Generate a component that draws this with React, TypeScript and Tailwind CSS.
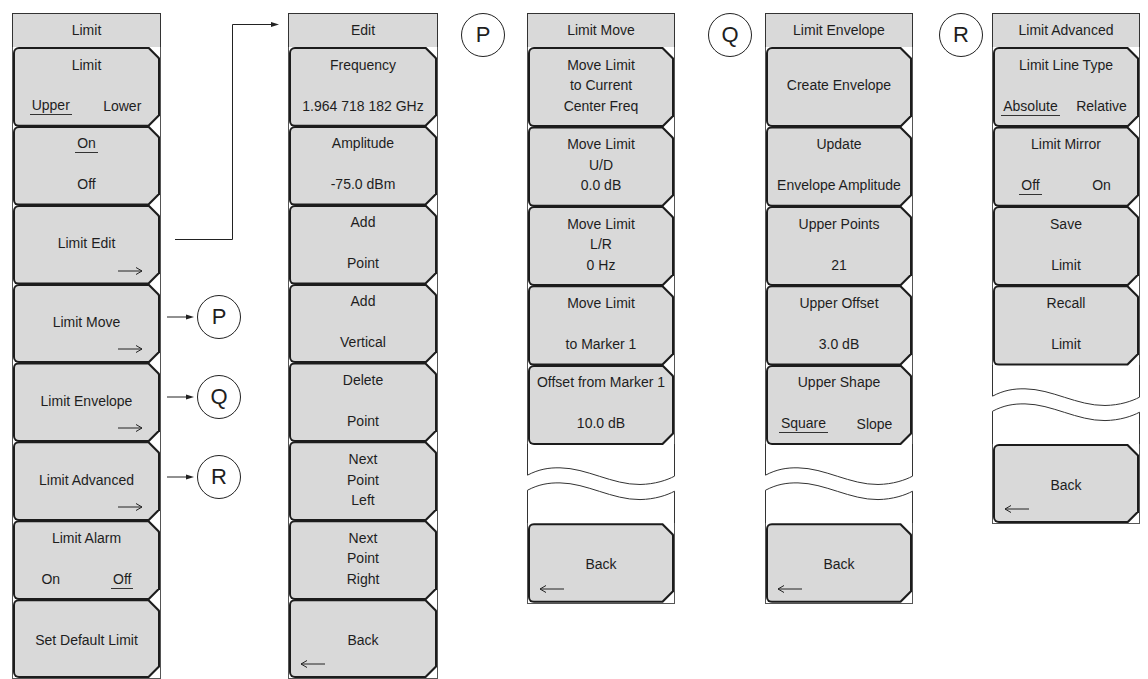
import type { ReactNode } from 'react';

type Row = string | null | { u: string } | { l: string; r: string; sel: 0 | 1 };

interface Btn {
  rows?: Row[];
  label?: string;
  kind?: 'more' | 'back' | 'low';
}

type Item = Btn | 'break';

const col1: Item[] = [
  { rows: ['Limit', null, { l: 'Upper', r: 'Lower', sel: 0 }] },
  { rows: [{ u: 'On' }, null, 'Off'] },
  { label: 'Limit Edit', kind: 'more' },
  { label: 'Limit Move', kind: 'more' },
  { label: 'Limit Envelope', kind: 'more' },
  { label: 'Limit Advanced', kind: 'more' },
  { rows: ['Limit Alarm', null, { l: 'On', r: 'Off', sel: 1 }] },
  { label: 'Set Default Limit', kind: 'low' },
];

const col2: Item[] = [
  { rows: ['Frequency', null, '1.964 718 182 GHz'] },
  { rows: ['Amplitude', null, '-75.0 dBm'] },
  { rows: ['Add', null, 'Point'] },
  { rows: ['Add', null, 'Vertical'] },
  { rows: ['Delete', null, 'Point'] },
  { rows: ['Next', 'Point', 'Left'] },
  { rows: ['Next', 'Point', 'Right'] },
  { label: 'Back', kind: 'back' },
];

const col3: Item[] = [
  { rows: ['Move Limit', 'to Current', 'Center Freq'] },
  { rows: ['Move Limit', 'U/D', '0.0 dB'] },
  { rows: ['Move Limit', 'L/R', '0 Hz'] },
  { rows: ['Move Limit', null, 'to Marker 1'] },
  { rows: ['Offset from Marker 1', null, '10.0 dB'] },
  'break',
  { label: 'Back', kind: 'back' },
];

const col4: Item[] = [
  { rows: [null, 'Create Envelope', null] },
  { rows: ['Update', null, 'Envelope Amplitude'] },
  { rows: ['Upper Points', null, '21'] },
  { rows: ['Upper Offset', null, '3.0 dB'] },
  { rows: ['Upper Shape', null, { l: 'Square', r: 'Slope', sel: 0 }] },
  'break',
  { label: 'Back', kind: 'back' },
];

const col5: Item[] = [
  { rows: ['Limit Line Type', null, { l: 'Absolute', r: 'Relative', sel: 0 }] },
  { rows: ['Limit Mirror', null, { l: 'Off', r: 'On', sel: 0 }] },
  { rows: ['Save', null, 'Limit'] },
  { rows: ['Recall', null, 'Limit'] },
  'break',
  { label: 'Back', kind: 'back' },
];

function Under({ children }: { children: ReactNode }) {
  return (
    <span className="inline-block border-b border-[#333] px-[2px] leading-[17px]">
      {children}
    </span>
  );
}

function RowView({ row }: { row: Row }) {
  if (row === null) return <div className="h-[20.5px]" />;
  if (typeof row === 'string') {
    return (
      <div className="flex h-[20.5px] items-center justify-center whitespace-nowrap">{row}</div>
    );
  }
  if ('u' in row) {
    return (
      <div className="flex h-[20.5px] items-center justify-center">
        <Under>{row.u}</Under>
      </div>
    );
  }
  return (
    <div className="grid h-[20.5px] grid-cols-2 items-center">
      <div className="flex justify-center">{row.sel === 0 ? <Under>{row.l}</Under> : row.l}</div>
      <div className="flex justify-center">{row.sel === 1 ? <Under>{row.r}</Under> : row.r}</div>
    </div>
  );
}

function RightArrow() {
  return (
    <svg width="25" height="10" viewBox="0 0 25 10" className="absolute bottom-[7px] right-[15px]">
      <path d="M0 5H24M18 1.5L24 5L18 8.5" fill="none" stroke="#222" strokeWidth="1" />
    </svg>
  );
}

function LeftArrow() {
  return (
    <svg width="25" height="10" viewBox="0 0 25 10" className="absolute bottom-[7px] left-[9px]">
      <path d="M1 5H25M7 1.5L1 5L7 8.5" fill="none" stroke="#222" strokeWidth="1" />
    </svg>
  );
}

function SoftKey({ btn, last }: { btn: Btn; last: boolean }) {
  return (
    <div
      className={`-mt-px h-[80.4px] border-x border-[#555] bg-white ${last ? 'border-b' : ''}`}
    >
      <div className="h-full rounded-l-[6px] bg-[#1c1c1c] p-[2px] [clip-path:polygon(0_0,calc(100%_-_11px)_0,100%_11px,100%_calc(100%_-_11px),calc(100%_-_11px)_100%,0_100%)]">
        <div className="relative flex h-full flex-col rounded-l-[4px] bg-[#d9d9d9] [clip-path:polygon(0_0,calc(100%_-_10px)_0,100%_10px,100%_calc(100%_-_10px),calc(100%_-_10px)_100%,0_100%)]">
          {btn.rows && (
            <div className="flex flex-col pt-[6px]">
              {btn.rows.map((r, i) => (
                <RowView key={i} row={r} />
              ))}
            </div>
          )}
          {btn.kind === 'more' && (
            <>
              <div className="flex flex-col pt-[6px]">
                <div className="h-[20.5px]" />
                <RowView row={btn.label ?? null} />
              </div>
              <RightArrow />
            </>
          )}
          {(btn.kind === 'back' || btn.kind === 'low') && (
            <>
              <div className="flex flex-col pt-[29px]">
                <RowView row={btn.label ?? null} />
              </div>
              {btn.kind === 'back' && <LeftArrow />}
            </>
          )}
        </div>
      </div>
    </div>
  );
}

function Break() {
  return (
    <div className="-mt-px h-[80.4px]">
      <svg width="100%" height="100%" viewBox="0 0 148 80" preserveAspectRatio="none">
        <g fill="none" stroke="#333" strokeWidth="1" vectorEffect="non-scaling-stroke">
          <path d="M0.5 0V31M0.5 46V80M147.5 0V32M147.5 47V80" vectorEffect="non-scaling-stroke" />
          <path
            d="M0.5 31C12 25 22 23.5 33 23.7C60 24 85 40.5 113 40.3C128 40 140 36 147.5 32"
            vectorEffect="non-scaling-stroke"
          />
          <path
            d="M0.5 46C12 40 22 38.5 33 38.7C60 39 85 55.5 113 55.3C128 55 140 51 147.5 47"
            vectorEffect="non-scaling-stroke"
          />
        </g>
      </svg>
    </div>
  );
}

function Menu({ title, items, width }: { title: string; items: Item[]; width: string }) {
  return (
    <div className={`flex shrink-0 flex-col ${width}`}>
      <div className="flex h-[35px] items-center justify-center border border-[#333] bg-[#d9d9d9]">
        {title}
      </div>
      {items.map((it, i) =>
        it === 'break' ? (
          <Break key={i} />
        ) : (
          <SoftKey key={i} btn={it} last={i === items.length - 1} />
        ),
      )}
    </div>
  );
}

function Badge({ letter }: { letter: string }) {
  return (
    <div className="flex h-[44px] w-[44px] shrink-0 items-center justify-center rounded-full border-[1.5px] border-[#222] text-[22px] leading-none">
      {letter}
    </div>
  );
}

function Pointer() {
  return (
    <svg width="27" height="8" viewBox="0 0 27 8" className="shrink-0">
      <path d="M0 4H21" stroke="#222" strokeWidth="1" />
      <polygon points="27,4 19,1.5 19,6.5" fill="#222" />
    </svg>
  );
}

export default function App() {
  return (
    <div className="flex h-[679px] w-[1148px] overflow-hidden bg-white pl-[12px] pt-[13px] font-['Liberation_Sans',Arial,sans-serif] text-[14px] text-[#1e1e1e]">
      <Menu title="Limit" items={col1} width="w-[149px]" />

      <div className="relative flex w-[127px] shrink-0 flex-col pt-[264px]">
        <svg width="127" height="240" className="absolute left-0 top-0">
          <path d="M14 226.5H71.5V11.5H112" fill="none" stroke="#222" strokeWidth="1" />
          <polygon points="118,11.5 110,9 110,14" fill="#222" />
        </svg>
        {['P', 'Q', 'R'].map((l) => (
          <div key={l} className="flex h-[80px] items-center pl-[6px]">
            <Pointer />
            <div className="ml-[3px]">
              <Badge letter={l} />
            </div>
          </div>
        ))}
      </div>

      <Menu title="Edit" items={col2} width="w-[150px]" />

      <div className="w-[89px] shrink-0 pl-[23px]">
        <Badge letter="P" />
      </div>

      <Menu title="Limit Move" items={col3} width="w-[148px]" />

      <div className="w-[90px] shrink-0 pl-[33px]">
        <Badge letter="Q" />
      </div>

      <Menu title="Limit Envelope" items={col4} width="w-[148px]" />

      <div className="w-[79px] shrink-0 pl-[26px]">
        <Badge letter="R" />
      </div>

      <Menu title="Limit Advanced" items={col5} width="w-[148px]" />
    </div>
  );
}
